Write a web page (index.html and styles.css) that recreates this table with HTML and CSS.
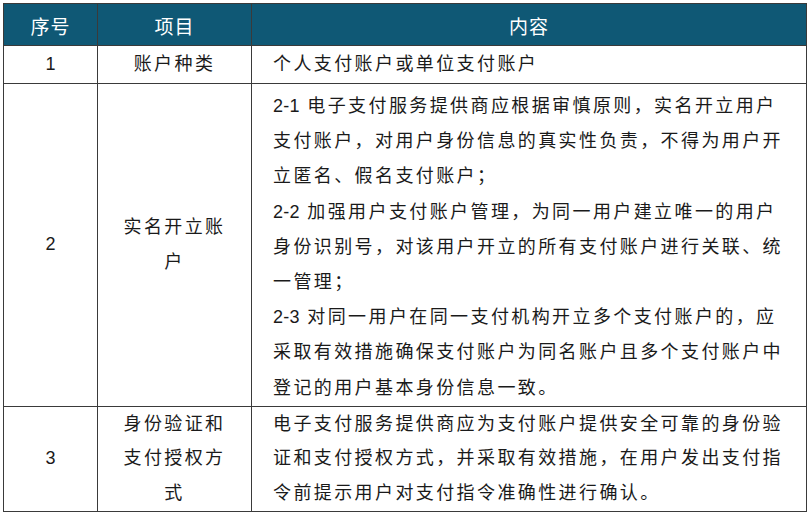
FILE: index.html
```html
<!DOCTYPE html>
<html lang="zh">
<head>
<meta charset="utf-8">
<title>支付账户</title>
<link rel="stylesheet" href="styles.css">
</head>
<body>
<table class="grid">
  <colgroup>
    <col class="c-no">
    <col class="c-item">
    <col class="c-body">
  </colgroup>
  <thead>
    <tr class="head">
      <th>序号</th>
      <th>项目</th>
      <th>内容</th>
    </tr>
  </thead>
  <tbody>
    <tr class="r1">
      <td class="num">1</td>
      <td>账户种类</td>
      <td class="content">个人支付账户或单位支付账户</td>
    </tr>
    <tr class="r2">
      <td class="num">2</td>
      <td>实名开立账<br>户</td>
      <td class="content pad"><span class="lat">2-1</span> 电子支付服务提供商应根据审慎原则，实名开立用户<br>支付账户，对用户身份信息的真实性负责，不得为用户开<br>立匿名、假名支付账户；<br><span class="lat">2-2</span> 加强用户支付账户管理，为同一用户建立唯一的用户<br>身份识别号，对该用户开立的所有支付账户进行关联、统<br>一管理；<br><span class="lat">2-3</span> 对同一用户在同一支付机构开立多个支付账户的，应<br>采取有效措施确保支付账户为同名账户且多个支付账户中<br>登记的用户基本身份信息一致。</td>
    </tr>
    <tr class="r3">
      <td class="num">3</td>
      <td class="tight">身份验证和<br>支付授权方<br>式</td>
      <td class="content tight">电子支付服务提供商应为支付账户提供安全可靠的身份验<br>证和支付授权方式，并采取有效措施，在用户发出支付指<br>令前提示用户对支付指令准确性进行确认。</td>
    </tr>
  </tbody>
</table>
</body>
</html>
```
FILE: styles.css
```css
html, body {
  background: #ffffff;
}
body {
  margin: 3px;
  font-family: "Liberation Sans", "Noto Sans CJK SC", sans-serif;
  color: #1a1a1a;
}
.grid {
  border-collapse: collapse;
  table-layout: fixed;
  width: 803px;
}
.c-no { width: 94px; }
.c-item { width: 154px; }
.c-body { width: 555px; }

.head th {
  background: #0f5875;
  color: #ffffff;
  font-weight: normal;
  font-size: 19px;
  letter-spacing: 1px;
  height: 39px;
  padding: 2px 0 0;
  border: 1px solid #3a3a3a;
  text-align: center;
  vertical-align: middle;
}
.grid td {
  border: 1px solid #3a3a3a;
  font-size: 18px;
  letter-spacing: 2.4px;
  line-height: 35.2px;
  text-align: center;
  vertical-align: middle;
  padding: 0;
}
.grid td.num {
  letter-spacing: 0;
}
.grid td.content {
  text-align: left;
  padding-left: 21px;
  white-space: nowrap;
}
.grid td.pad {
  padding-top: 5px;
  padding-bottom: 0;
}
.grid td.tight {
  line-height: 34.6px;
}
.lat {
  letter-spacing: 0.3px;
}
.r1 { height: 38px; }
.r2 { height: 321px; }
.r3 { height: 104px; }
```
